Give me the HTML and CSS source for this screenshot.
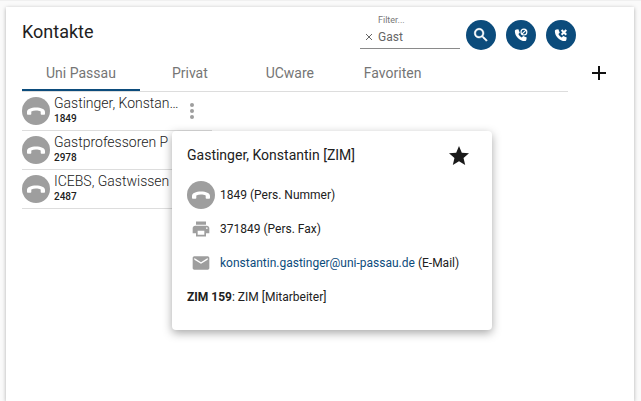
FILE: index.html
```
<!DOCTYPE html>
<html lang="de">
<head>
  <meta charset="UTF-8">
  <meta name="viewport" content="width=device-width, initial-scale=1.0">
  <title>Kontakte</title>
  <link rel="stylesheet" href="styles.css">
</head>
<body>
  <!-- Shared icons -->
  <svg class="sprite" aria-hidden="true">
    <symbol id="icon-hangup" viewBox="0 0 18 18">
      <path d="M0 12V10C0 7 4 5.500 9 5.500s9 1.500 9 4.500v2c0 .5-.3.800-.8.800h-2.700c-.5 0-.8-.3-.8-.8V9.500C12.200 8.700 10.700 8.400 9 8.400s-3.200.3-4.700 1.100V12c0 .5-.3.800-.8.800H.8c-.5 0-.8-.3-.8-.8z"/>
    </symbol>
    <symbol id="icon-phone" viewBox="0 0 24 24">
      <path d="M4 2.500 7.500 2l2.400 6-2.400 2.400c1.200 2.600 3.200 4.600 5.700 5.900l2.600-2.600 6 2.700-.6 3.800c-.2 1.300-1.200 2.200-2.500 2.200C9.500 22.400 1.500 14 1.500 5.500c0-1.500 1-2.800 2.500-3z"/>
    </symbol>
  </svg>

  <main class="card">
    <header class="card-header">
      <h1>Kontakte</h1>
      <div class="filter">
        <label for="filter">Filter...</label>
        <div class="filter-row">
          <button type="button" class="clear-btn" id="clear" aria-label="Filter löschen">
            <svg viewBox="0 0 8 8"><path d="M1 1l6 6M7 1l-6 6"/></svg>
          </button>
          <input type="text" id="filter" value="Gast">
        </div>
      </div>
      <div class="actions">
        <button type="button" class="round-btn" aria-label="Suchen">
          <svg viewBox="0 0 24 24" width="18" height="18"><path d="M15.500 14h-.79l-.28-.27C15.410 12.590 16 11.110 16 9.500 16 5.910 13.090 3 9.500 3S3 5.910 3 9.500 5.910 16 9.500 16c1.610 0 3.090-.59 4.230-1.570l.27.28v.79l5 4.990L20.490 19l-4.990-5zm-6 0C7.010 14 5 11.990 5 9.500S7.010 5 9.500 5 14 7.010 14 9.500 11.990 14 9.500 14z" stroke="#fff" stroke-width=".6"/></svg>
        </button>
        <button type="button" class="round-btn" aria-label="Anrufe sperren">
          <svg viewBox="0 0 24 24" width="14" height="14">
            <use href="#icon-phone"/>
            <circle cx="17" cy="7" r="5" fill="none" stroke="#fff" stroke-width="2"/>
            <path d="M13.500 10.500l7-7" stroke="#fff" stroke-width="2"/>
          </svg>
        </button>
        <button type="button" class="round-btn" aria-label="Anruf beenden">
          <svg viewBox="0 0 24 24" width="14" height="14">
            <use href="#icon-phone"/>
            <path d="M13 3.500l8 8M21 3.500l-8 8" stroke="#fff" stroke-width="3.500"/>
          </svg>
        </button>
      </div>
    </header>

    <div class="tab-bar">
      <nav class="tabs" role="tablist">
        <button type="button" role="tab" class="tab active" aria-selected="true">Uni Passau</button>
        <button type="button" role="tab" class="tab" aria-selected="false">Privat</button>
        <button type="button" role="tab" class="tab" aria-selected="false">UCware</button>
        <button type="button" role="tab" class="tab" aria-selected="false">Favoriten</button>
      </nav>
      <button type="button" class="add-btn" aria-label="Hinzufügen">
        <svg viewBox="0 0 14 14" width="14" height="14"><path d="M0 7h14M7 0v14"/></svg>
      </button>
    </div>

    <ul class="contacts">
      <li class="contact">
        <button type="button" class="call-btn" aria-label="1849 anrufen"><svg><use href="#icon-hangup"/></svg></button>
        <div class="contact-text">
          <div class="name">Gastinger, Konstantin [ZIM]</div>
          <div class="number">1849</div>
        </div>
        <button type="button" class="more-btn" aria-label="Mehr">
          <svg viewBox="0 0 4 16" width="4" height="16"><circle cx="2" cy="2" r="2"/><circle cx="2" cy="8" r="2"/><circle cx="2" cy="14" r="2"/></svg>
        </button>

        <section class="popup">
          <div class="popup-header">
            <h2>Gastinger, Konstantin [ZIM]</h2>
            <button type="button" class="star-btn" aria-label="Favorit">
              <svg viewBox="0 0 24 24" width="24" height="24"><path d="M12 17.270 18.180 21l-1.640-7.030L22 9.240l-7.190-.61L12 2 9.190 8.630 2 9.240l5.460 4.730L5.820 21z"/></svg>
            </button>
          </div>
          <div class="detail">
            <button type="button" class="call-btn" aria-label="1849 anrufen"><svg><use href="#icon-hangup"/></svg></button>
            <span>1849 (Pers. Nummer)</span>
          </div>
          <div class="detail">
            <svg class="detail-icon" viewBox="0 0 24 24"><path d="M19 8H5c-1.660 0-3 1.340-3 3v6h4v4h12v-4h4v-6c0-1.660-1.340-3-3-3zm-3 11H8v-5h8v5zm3-7c-.55 0-1-.45-1-1s.45-1 1-1 1 .45 1 1-.45 1-1 1zm-1-9H6v4h12V3z"/></svg>
            <span>371849 (Pers. Fax)</span>
          </div>
          <div class="detail">
            <svg class="detail-icon" viewBox="0 0 24 24"><path d="M20 4H4c-1.100 0-1.990.9-1.990 2L2 18c0 1.100.9 2 2 2h16c1.100 0 2-.9 2-2V6c0-1.100-.9-2-2-2zm0 4l-8 5-8-5V6l8 5 8-5v2z"/></svg>
            <span><a href="mailto:konstantin.gastinger@uni-passau.de">konstantin.gastinger@uni-passau.de</a> (E-Mail)</span>
          </div>
          <p class="office"><b>ZIM 159</b>: ZIM [Mitarbeiter]</p>
        </section>
      </li>
      <li class="contact">
        <button type="button" class="call-btn" aria-label="2978 anrufen"><svg><use href="#icon-hangup"/></svg></button>
        <div class="contact-text">
          <div class="name">Gastprofessoren P</div>
          <div class="number">2978</div>
        </div>
      </li>
      <li class="contact">
        <button type="button" class="call-btn" aria-label="2487 anrufen"><svg><use href="#icon-hangup"/></svg></button>
        <div class="contact-text">
          <div class="name">ICEBS, Gastwissen</div>
          <div class="number">2487</div>
        </div>
      </li>
    </ul>
  </main>

  <script>
    document.getElementById("clear").addEventListener("click", function () {
      document.getElementById("filter").value = "";
    });
  </script>
</body>
</html>
```
FILE: styles.css
```
/* General Styling */
* {
  box-sizing: border-box;
}

body {
  font-family: Roboto, sans-serif;
  background: #fafafa;
  color: #212121;
  margin: 0;
  min-height: 100vh;
  border-top: 1px solid #f0f0f0;
  display: flex;
  flex-direction: column;
}

button {
  padding: 0;
  border: none;
  background: none;
  font-family: inherit;
  cursor: pointer;
}

svg {
  display: block;
}

.sprite {
  position: absolute;
  width: 0;
  height: 0;
}

.card {
  flex: 1;
  margin: 6px 7px 0 6px;
  padding: 0 16px;
  background: white;
  box-shadow: 0 1px 4px rgba(0, 0, 0, 0.3);
}

/* Header */
.card-header {
  display: flex;
  height: 50px;
  padding-right: 42px;
}

h1 {
  flex: 1;
  margin: 0;
  font-size: 18px;
  font-weight: 400;
  line-height: 50px;
}

.filter {
  width: 100px;
  height: 42px;
  padding-top: 7px;
  border-bottom: 1px solid #8a8a8a;
}

.filter label {
  display: block;
  padding-left: 18px;
  font-size: 9px;
  line-height: 12px;
  color: #777;
}

.filter-row {
  display: flex;
  align-items: center;
  height: 22px;
  padding-left: 5px;
  gap: 5px;
}

.clear-btn svg {
  width: 8px;
  height: 8px;
  stroke: #666;
}

.filter input {
  width: 100%;
  min-width: 0;
  padding: 0;
  border: none;
  outline: none;
  background: none;
  font-family: inherit;
  font-size: 12px;
  color: #666;
}

.actions {
  display: flex;
  gap: 10px;
  padding: 13px 0 0 6px;
}

.round-btn {
  display: flex;
  align-items: center;
  justify-content: center;
  width: 30px;
  height: 30px;
  border-radius: 50%;
  background: #0c4c7c;
  fill: white;
}

/* Tabs */
.tab-bar {
  display: flex;
}

.tabs {
  flex: 1;
  display: flex;
  height: 35px;
  border-bottom: 1px solid #ddd;
}

.tab {
  min-width: 100px;
  height: 34px;
  padding: 0 24px;
  border-bottom: 2px solid transparent;
  font-size: 14px;
  color: #757575;
}

.tab.active {
  border-bottom-color: #0c4c7c;
}

.add-btn {
  height: 32px;
  margin: 0 12px 0 24px;
}

.add-btn svg {
  stroke: #111;
  stroke-width: 2;
}

/* Contact list */
.contacts {
  width: 190px;
  margin: 0;
  padding: 0;
  list-style: none;
}

.contact {
  position: relative;
  display: flex;
  align-items: center;
  gap: 4px;
  height: 39px;
  border-bottom: 1px solid #ddd;
}

.call-btn {
  flex: none;
  width: 28px;
  height: 28px;
  padding: 5px;
  border-radius: 50%;
  background: #9e9e9e;
  fill: white;
}

.call-btn svg {
  width: 18px;
  height: 18px;
}

.contact-text {
  width: 129px;
}

.name {
  font-size: 14px;
  font-weight: 300;
  line-height: 16px;
  white-space: nowrap;
  overflow: hidden;
  text-overflow: ellipsis;
}

.number {
  font-size: 10px;
  font-weight: 500;
  line-height: 16px;
}

.more-btn {
  padding: 0 3px;
  fill: #9e9e9e;
}

/* Contact details */
.popup {
  position: absolute;
  z-index: 1;
  top: 39px;
  left: 150px;
  width: 320px;
  padding: 8px 15px 16px;
  background: white;
  border-radius: 4px;
  box-shadow: 0 3px 10px rgba(0, 0, 0, 0.35);
  font-size: 12px;
}

.popup-header {
  display: flex;
  align-items: center;
  justify-content: space-between;
  height: 32px;
  padding-right: 6px;
  margin-bottom: 7px;
}

h2 {
  margin: 0;
  font-size: 14px;
  font-weight: 400;
}

.star-btn {
  padding-top: 2px;
  fill: #1a1a1a;
}

.detail {
  display: flex;
  align-items: center;
  gap: 5px;
  height: 34px;
}

.detail-icon {
  width: 20px;
  height: 20px;
  margin: 0 4px;
  fill: #9e9e9e;
}

.detail a {
  color: #0c4c7c;
  text-decoration: none;
}

.office {
  margin: 0;
  line-height: 34px;
}
```
